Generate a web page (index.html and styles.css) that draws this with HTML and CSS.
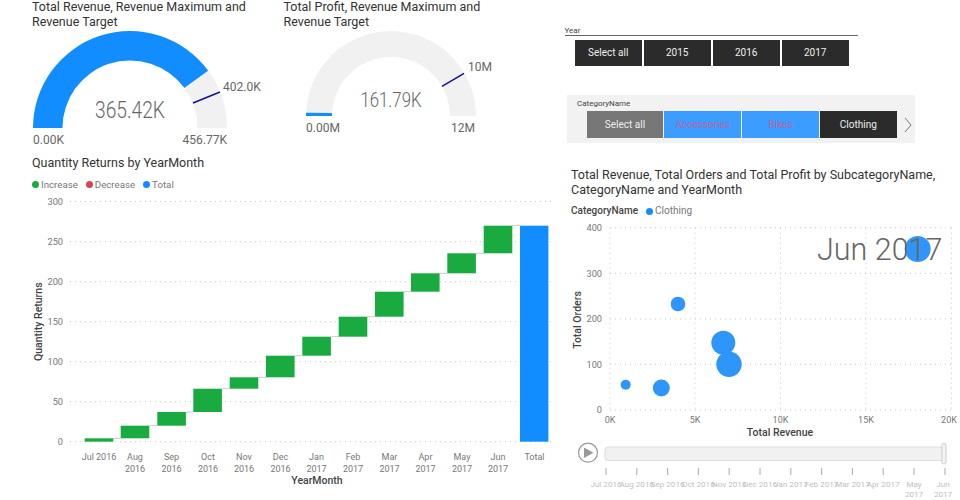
FILE: index.html
```html
<!DOCTYPE html>
<html lang="en">
<head>
  <meta charset="UTF-8" />
  <title>Sales Dashboard</title>
  <link rel="stylesheet" href="styles.css">
</head>
<body>
  <div class="dash">
    <div class="left">
      <div class="gauges">
        <div class="gauge gauge-revenue">
          <div class="title">Total Revenue, Revenue Maximum and<br>Revenue Target</div>
          <svg class="gauge-svg" width="251" height="121" viewBox="0 29 251 121">
            <path class="arc-blue" d="M33 128A97 97 0 0 1 208.3 70.8L184.5 88.1A67.5 67.5 0 0 0 62.5 128Z"/>
            <path class="arc-grey" d="M208.3 70.8A97 97 0 0 1 227 128L197.5 128A67.5 67.5 0 0 0 184.5 88.1Z"/>
            <line class="target" x1="193" y1="103" x2="220" y2="92"/>
            <text class="gauge-value" x="130" y="118" textLength="70" lengthAdjust="spacingAndGlyphs">365.42K</text>
            <text class="gauge-label" x="223" y="91">402.0K</text>
            <text class="gauge-label" x="33" y="144">0.00K</text>
            <text class="gauge-label end" x="227" y="144">456.77K</text>
          </svg>
        </div>
        <div class="gauge gauge-profit">
          <div class="title">Total Profit, Revenue Maximum and<br>Revenue Target</div>
          <svg class="gauge-svg" width="260" height="121" viewBox="251 29 260 121">
            <path class="arc-grey" d="M306 116A85 85 0 0 1 476 116L450 116A59 59 0 0 0 332 116Z"/>
            <path class="arc-blue" d="M306 116L306 112.8L331.8 113L332 116Z"/>
            <line class="target" x1="442" y1="86.3" x2="464" y2="73.3"/>
            <text class="gauge-value small" x="391" y="107" textLength="61" lengthAdjust="spacingAndGlyphs">161.79K</text>
            <text class="gauge-label" x="468" y="71">10M</text>
            <text class="gauge-label" x="306" y="132">0.00M</text>
            <text class="gauge-label end" x="475" y="132">12M</text>
          </svg>
        </div>
      </div>
      <div class="waterfall">
        <div class="title">Quantity Returns by YearMonth</div>
        <div class="legend">
          <span class="legend-item"><i class="dot dot-green"></i>Increase</span>
          <span class="legend-item"><i class="dot dot-red"></i>Decrease</span>
          <span class="legend-item"><i class="dot dot-blue"></i>Total</span>
        </div>
        <svg class="chart" width="560" height="308" viewBox="0 192 560 308">
          <g class="grid">
            <line x1="70" y1="201.5" x2="552" y2="201.5"/>
            <line x1="70" y1="241.7" x2="552" y2="241.7"/>
            <line x1="70" y1="281.7" x2="552" y2="281.7"/>
            <line x1="70" y1="321.7" x2="552" y2="321.7"/>
            <line x1="70" y1="361.7" x2="552" y2="361.7"/>
            <line x1="70" y1="401.7" x2="552" y2="401.7"/>
            <line x1="70" y1="441.7" x2="552" y2="441.7"/>
          </g>
          <g class="axis-y">
            <text x="63" y="205">300</text>
            <text x="63" y="245">250</text>
            <text x="63" y="285">200</text>
            <text x="63" y="325">150</text>
            <text x="63" y="365">100</text>
            <text x="63" y="405">50</text>
            <text x="63" y="445">0</text>
          </g>
          <g class="connectors">
            <path d="M113 438.3H121M149 425.7H157M186 412H193M222 388.7H230M258 377.3H266M295 355.7H302M331 336.7H339M367 316.7H375M403 291.7H411M439 273.3H447M476 253.3H484M512 225.7H520"/>
          </g>
          <g class="bars">
            <rect x="84.7" y="438.3" width="28.6" height="3.4"/>
            <rect x="120.7" y="425.7" width="28.6" height="12.6"/>
            <rect x="157.3" y="412" width="28.6" height="13.7"/>
            <rect x="193.3" y="388.7" width="28.6" height="23.3"/>
            <rect x="229.7" y="377.3" width="28.6" height="11.4"/>
            <rect x="266" y="355.7" width="28.6" height="21.6"/>
            <rect x="302.3" y="336.7" width="28.6" height="19"/>
            <rect x="338.7" y="316.7" width="28.6" height="20"/>
            <rect x="375" y="291.7" width="28.6" height="25"/>
            <rect x="411" y="273.3" width="28.6" height="18.4"/>
            <rect x="447.3" y="253.3" width="28.6" height="20"/>
            <rect x="483.7" y="225.7" width="28.6" height="27.6"/>
          </g>
          <rect class="bar-total" x="520" y="225.7" width="28.4" height="216"/>
          <g class="axis-x">
            <text x="99" y="460">Jul 2016</text>
            <text x="135" y="460">Aug</text><text x="135" y="472">2016</text>
            <text x="171.5" y="460">Sep</text><text x="171.5" y="472">2016</text>
            <text x="208" y="460">Oct</text><text x="208" y="472">2016</text>
            <text x="244" y="460">Nov</text><text x="244" y="472">2016</text>
            <text x="280.5" y="460">Dec</text><text x="280.5" y="472">2016</text>
            <text x="316.5" y="460">Jan</text><text x="316.5" y="472">2017</text>
            <text x="353" y="460">Feb</text><text x="353" y="472">2017</text>
            <text x="389.5" y="460">Mar</text><text x="389.5" y="472">2017</text>
            <text x="425.5" y="460">Apr</text><text x="425.5" y="472">2017</text>
            <text x="462" y="460">May</text><text x="462" y="472">2017</text>
            <text x="498" y="460">Jun</text><text x="498" y="472">2017</text>
            <text x="534.5" y="460">Total</text>
          </g>
          <text class="axis-title" x="317" y="484">YearMonth</text>
          <text class="axis-title" transform="translate(42 321.7) rotate(-90)">Quantity Returns</text>
        </svg>
      </div>
    </div>

    <div class="right">
      <div class="year-slicer">
        <div class="slicer-label">Year</div>
        <div class="year-buttons">
          <div class="btn btn-dark">Select all</div>
          <div class="btn btn-dark">2015</div>
          <div class="btn btn-dark">2016</div>
          <div class="btn btn-dark">2017</div>
        </div>
      </div>
      <div class="category-slicer">
        <div class="slicer-label">CategoryName</div>
        <div class="category-buttons">
          <div class="btn btn-grey">Select all</div>
          <div class="btn btn-blue">Accessories</div>
          <div class="btn btn-blue">Bikes</div>
          <div class="btn btn-dark">Clothing</div>
          <svg class="chevron" width="10" height="16" viewBox="0 0 10 16"><path d="M2 1L8 8L2 15"/></svg>
        </div>
      </div>
      <div class="scatter">
        <div class="title">Total Revenue, Total Orders and Total Profit by SubcategoryName,<br>CategoryName and YearMonth</div>
        <div class="legend legend-scatter">
          <b>CategoryName</b>
          <span class="legend-item"><i class="dot dot-blue"></i>Clothing</span>
        </div>
        <svg class="chart" width="400" height="282" viewBox="560 218 400 282">
          <g class="grid">
            <line x1="610" y1="227.7" x2="952" y2="227.7"/>
            <line x1="610" y1="273.3" x2="952" y2="273.3"/>
            <line x1="610" y1="319" x2="952" y2="319"/>
            <line x1="610" y1="364.3" x2="952" y2="364.3"/>
            <line x1="610" y1="410" x2="952" y2="410"/>
            <line x1="610" y1="227.7" x2="610" y2="410"/>
            <line x1="695" y1="227.7" x2="695" y2="410"/>
            <line x1="780.5" y1="227.7" x2="780.5" y2="410"/>
            <line x1="866" y1="227.7" x2="866" y2="410"/>
            <line x1="951.5" y1="227.7" x2="951.5" y2="410"/>
          </g>
          <g class="axis-y">
            <text x="602" y="231">400</text>
            <text x="602" y="276.5">300</text>
            <text x="602" y="322">200</text>
            <text x="602" y="367.5">100</text>
            <text x="602" y="413">0</text>
          </g>
          <g class="axis-x">
            <text x="610" y="423">0K</text>
            <text x="695" y="423">5K</text>
            <text x="780.5" y="423">10K</text>
            <text x="866" y="423">15K</text>
            <text x="949" y="423">20K</text>
          </g>
          <g class="bubbles">
            <circle cx="917.7" cy="249" r="13"/>
            <circle cx="678" cy="304" r="7.3"/>
            <circle cx="723.3" cy="342.7" r="12"/>
            <circle cx="729" cy="364.3" r="12.7"/>
            <circle cx="625.7" cy="384.7" r="5"/>
            <circle cx="661.3" cy="388" r="8.5"/>
          </g>
          <text class="play-date" x="817" y="260">Jun 2017</text>
          <text class="axis-title" x="780" y="436">Total Revenue</text>
          <text class="axis-title" transform="translate(581 320) rotate(-90)">Total Orders</text>
          <circle class="play-ring" cx="588" cy="452.7" r="9.5"/>
          <path class="play-arrow" d="M584 447.5L593.5 452.7L584 458Z"/>
          <rect class="track" x="605" y="447" width="339" height="13.5" rx="3"/>
          <rect class="handle" x="942" y="443.5" width="4" height="20.5" rx="2"/>
          <path class="ticks" d="M606 468V475M636.8 468V475M667.6 468V475M698.4 468V475M729.2 468V475M760 468V475M790.8 468V475M821.6 468V475M852.4 468V475M883.2 468V475M914 468V475M945 468V475"/>
          <g class="axis-time">
            <text x="606" y="487">Jul 2016</text>
            <text x="636.8" y="487">Aug 2016</text>
            <text x="667.6" y="487">Sep 2016</text>
            <text x="698.4" y="487">Oct 2016</text>
            <text x="729.2" y="487">Nov 2016</text>
            <text x="760" y="487">Dec 2016</text>
            <text x="790.8" y="487">Jan 2017</text>
            <text x="821.6" y="487">Feb 2017</text>
            <text x="852.4" y="487">Mar 2017</text>
            <text x="883.2" y="487">Apr 2017</text>
            <text x="914" y="487">May</text><text x="914" y="497">2017</text>
            <text x="943" y="487">Jun</text><text x="943" y="497">2017</text>
          </g>
        </svg>
      </div>
    </div>
  </div>
</body>
</html>
```
FILE: styles.css
```css
body {
  margin: 0;
  background: #fff;
  font-family: "Roboto", "Liberation Sans", sans-serif;
  color: #333;
}
svg {
  display: block;
}
svg text {
  font-family: "Roboto", "Liberation Sans", sans-serif;
}
.dash {
  display: flex;
  width: 960px;
  height: 500px;
  overflow: hidden;
}
.left {
  width: 560px;
}
.right {
  width: 400px;
}
.title {
  font-size: 12.5px;
  line-height: 14.5px;
  color: #333;
}

/* gauges */
.gauges {
  display: flex;
  height: 150px;
}
.gauge-revenue {
  width: 251px;
}
.gauge-revenue .title {
  padding-left: 32px;
}
.gauge-profit .title {
  padding-left: 32.5px;
}
.gauge-svg {
  overflow: visible;
}
.arc-blue {
  fill: #118dff;
}
.arc-grey {
  fill: #f1f1f1;
}
.target {
  stroke: #12128a;
  stroke-width: 1.5;
}
.gauge-value {
  font-size: 24px;
  font-weight: 300;
  fill: #666;
  text-anchor: middle;
}
.gauge-value.small {
  font-size: 21px;
}
.gauge-label {
  font-size: 12px;
  fill: #666;
}
.gauge-label.end {
  text-anchor: end;
}

/* waterfall */
.waterfall {
  padding-top: 6px;
}
.waterfall .title {
  padding-left: 32px;
}
.legend {
  display: flex;
  gap: 8px;
  height: 14.5px;
  margin-top: 7px;
  padding-left: 32px;
  font-size: 9.7px;
  line-height: 14px;
  color: #777;
}
.legend-item {
  display: flex;
  align-items: center;
}
.dot {
  width: 7px;
  height: 7px;
  margin-right: 2px;
  border-radius: 50%;
}
.dot-green {
  background: #1aab40;
}
.dot-red {
  background: #d64554;
}
.dot-blue {
  background: #118dff;
}
.grid line {
  stroke: #c8c8c8;
  stroke-dasharray: 1 4;
}
.axis-y text {
  font-size: 9.2px;
  fill: #777;
  text-anchor: end;
}
.axis-x text {
  font-size: 9px;
  fill: #777;
  text-anchor: middle;
}
.axis-title {
  font-size: 10.5px;
  font-weight: 500;
  fill: #444;
  text-anchor: middle;
}
.connectors path {
  stroke: #ccc;
  fill: none;
}
.bars rect {
  fill: #1aab40;
}
.bar-total {
  fill: #118dff;
}

/* slicers */
.slicer-label {
  font-size: 8px;
  line-height: 10px;
  color: #444;
}
.year-slicer {
  margin: 26px 0 0 4.5px;
  width: 293px;
}
.year-slicer .slicer-label {
  height: 9px;
  padding-top: 1px;
  line-height: 9px;
  border-bottom: 1px solid #666;
  box-sizing: content-box;
  margin-top: -1px;
}
.year-buttons {
  display: flex;
  gap: 1.5px;
  margin: 3.5px 0 0 10px;
}
.year-buttons .btn {
  width: 67.5px;
  height: 26px;
}
.btn {
  display: flex;
  align-items: center;
  justify-content: center;
  font-size: 10px;
  color: #eee;
}
.btn-dark {
  background: #2b2b2b;
}
.btn-grey {
  background: #777;
}
.btn-blue {
  background: #3a9dff;
  color: #b5699f;
}
.category-slicer {
  margin: 29.5px 0 0 7px;
  width: 348px;
  height: 48px;
  background: #f2f2f2;
}
.category-slicer .slicer-label {
  padding: 4px 0 0 10px;
  height: 12px;
}
.category-buttons {
  display: flex;
  align-items: center;
  gap: 1.3px;
  margin-left: 19.7px;
}
.category-buttons .btn {
  width: 76.5px;
  height: 27px;
}
.chevron {
  margin-left: 5px;
}
.chevron path {
  fill: none;
  stroke: #777;
}

/* scatter */
.scatter {
  padding-top: 25px;
}
.scatter .title {
  padding-left: 11px;
}
.legend-scatter {
  height: 14px;
  margin-top: 7px;
  padding-left: 11px;
  font-size: 10px;
  color: #777;
}
.legend-scatter b {
  font-weight: 500;
  color: #444;
}
.bubbles circle {
  fill: #2d96f8;
}
.play-date {
  font-size: 30.5px;
  font-weight: 300;
  fill: #666;
}
.play-ring {
  fill: #fff;
  stroke: #999;
  stroke-width: 1.2;
}
.play-arrow {
  fill: #999;
}
.track {
  fill: #f1f1f1;
  stroke: #ddd;
}
.handle {
  fill: #f4f4f4;
  stroke: #ccc;
}
.ticks {
  stroke: #aaa;
  fill: none;
}
.axis-time text {
  font-size: 8.1px;
  fill: #c0c0c0;
  text-anchor: middle;
}
```
